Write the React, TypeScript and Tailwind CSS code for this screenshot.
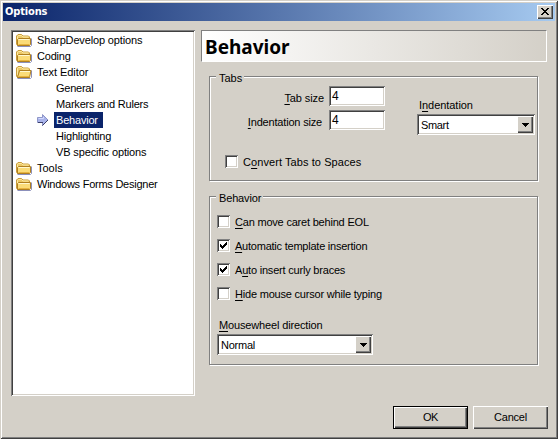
import type { ReactNode } from "react";

const SUNKEN =
  "bg-white shadow-[inset_1px_1px_0_#808080,inset_-1px_-1px_0_#fff,inset_2px_2px_0_#404040,inset_-2px_-2px_0_#d4d0c8]";
const RAISED =
  "bg-[#d4d0c8] shadow-[inset_1px_1px_0_#fff,inset_-1px_-1px_0_#404040,inset_-2px_-2px_0_#808080]";

/* Caption whose access key is marked by a preceding "&". */
function Caption({ text, className = "" }: { text: string; className?: string }) {
  const at = text.indexOf("&");
  return (
    <span className={"block whitespace-pre leading-[14px] " + className}>
      {at < 0 ? text : (
        <>
          {text.slice(0, at)}
          <span className="underline decoration-1 underline-offset-2">{text[at + 1]}</span>
          {text.slice(at + 2)}
        </>
      )}
    </span>
  );
}

function Folder({ open = false }: { open?: boolean }) {
  return (
    <svg width="16" height="14" viewBox="0 0 16 14" className="shrink-0">
      <path d="M1.500 13.500h13l1-1V5.500" fill="none" stroke="#7f84b4" strokeOpacity=".9" />
      <path d="M.5 11V3L2 1.500h3.500L7 3h5.500l1 1v8.500h-12z" fill="#ecc866" stroke="#c99c3a" />
      <path d="M1.500 10V3.500l1-1h3L7 4h5.500" fill="none" stroke="#fbe9a0" />
      {open ? (
        <path d="M1.500 12.500l2-7h11.500l-1.500 7z" fill="#fbdc78" stroke="#b08020" />
      ) : (
        <path d="M1.500 12.500V6.500l1-1h12v6l-1 1z" fill="#fbdc78" stroke="#b08020" />
      )}
      <path d={open ? "M4 6.500h10" : "M2.500 6.500h11"} stroke="#fff8cf" />
      <path d="M2.500 11.500h11" stroke="#e8b440" />
    </svg>
  );
}

function FolderRow({ text, open, className = "" }: { text: string; open?: boolean; className?: string }) {
  return (
    <div className="flex h-4 items-center pl-[3px]">
      <Folder open={open} />
      <Caption text={text} className={"ml-[5px] " + className} />
    </div>
  );
}

function LeafRow({ text, selected, className = "" }: { text: string; selected?: boolean; className?: string }) {
  return (
    <div className="flex h-4 items-center pl-6">
      <span className="w-[17px] shrink-0">
        {selected && (
          <svg width="12" height="12" viewBox="0 0 12 12">
            <path d="M.5 3.500h5v-3l5.500 5.500-5.500 5.500v-3h-5z" fill="#a9b3ea" stroke="#8f97c8" />
            <path d="M5.500 11.500l5.500-5.500M1 8.500h5" stroke="#3c4068" />
            <path d="M1.500 4.500h5V3" stroke="#d3daff" fill="none" />
          </svg>
        )}
      </span>
      <span className={"flex h-4 items-center pl-[2px] " + (selected ? "w-[49px] bg-[#0a246a] text-white" : "")}>
        <Caption text={text} className={className} />
      </span>
    </div>
  );
}

function Group({ title, size, children, className = "" }: { title: string; size: string; children: ReactNode; className?: string }) {
  return (
    <section className={"ml-2 w-[329px] border border-[#808080] shadow-[1px_1px_0_#fff,inset_1px_1px_0_#fff] " + size}>
      <div className="-mt-[6px] ml-[6px] flex h-[14px]">
        <Caption text={title} className={"bg-[#d4d0c8] pl-[3px] pr-[2px] " + className} />
      </div>
      {children}
    </section>
  );
}

function Check({ text, checked, className = "" }: { text: string; checked?: boolean; className?: string }) {
  return (
    <div className="flex h-[13px] items-center">
      <span className={"flex size-[13px] shrink-0 items-center justify-center " + SUNKEN}>
        {checked && (
          <svg width="7" height="7" viewBox="0 0 7 7" shapeRendering="crispEdges">
            <path d="M0 2h1v1h1v1h1V3h1V2h1V1h1V0h1v3H6v1H5v1H4v1H3v1H2V6H1V5H0z" />
          </svg>
        )}
      </span>
      <Caption text={text} className={"ml-[5px] pt-px " + className} />
    </div>
  );
}

function Combo({ value, width, className = "" }: { value: string; width: string; className?: string }) {
  return (
    <div className={"flex h-[21px] items-center p-[2px] " + SUNKEN + " " + width}>
      <Caption text={value} className={"flex-1 pl-[2px] pt-px " + className} />
      <span className={"flex h-[17px] w-4 items-center justify-center " + RAISED}>
        <svg width="7" height="4" viewBox="0 0 7 4" shapeRendering="crispEdges">
          <path d="M0 0h7v1H6v1H5v1H4v1H3V3H2V2H1V1H0z" />
        </svg>
      </span>
    </div>
  );
}

function SizeRow({ text, className = "" }: { text: string; className?: string }) {
  return (
    <div className="flex h-5 justify-between">
      <Caption text={text} className={"ml-auto pt-[5px] " + className} />
      <div className={"h-5 w-14 pl-[3px] pt-[3px] text-[12px] " + SUNKEN}>
        <Caption text="4" />
      </div>
    </div>
  );
}

export default function App() {
  return (
    <div className="h-[439px] w-[558px] cursor-default overflow-hidden bg-[#d4d0c8] p-[3px] font-['Liberation_Sans',Arial,sans-serif] text-[11px] text-black shadow-[inset_1px_1px_0_#d4d0c8,inset_-1px_-1px_0_#404040,inset_2px_2px_0_#fff,inset_-2px_-2px_0_#808080]">
      <header className="flex h-[18px] items-center justify-between bg-linear-to-r/srgb from-[#0a246a] to-[#a6caf0] pl-[2px] pr-[2px]">
        <span className="font-['DejaVu_Sans_Condensed','DejaVu_Sans',sans-serif] text-[11px] font-bold leading-[14px] tracking-[-0.15px] text-white">Options</span>
        <button className={"flex h-[14px] w-4 items-center justify-center " + RAISED}>
          <svg width="8" height="7" viewBox="0 0 8 7" shapeRendering="crispEdges" className="-ml-px -mt-px">
            <path d="M0 0h2v1h1v1h2V1h1V0h2v1H7v1H6v1H5v1h1v1h1v1h1v1H6V6H5V5H3v1H2v1H0V6h1V5h1V4h1V3H2V2H1V1H0z" />
          </svg>
        </button>
      </header>

      <div className="flex gap-[6px] pl-2 pt-[9px]">
        <nav className={"h-[366px] w-[184px] p-[2px] " + SUNKEN}>
          <FolderRow text="SharpDevelop options" className="tracking-[-0.15px]" />
          <FolderRow text="Coding" className="tracking-[-0.2px]" />
          <FolderRow text="Text Editor" open className="tracking-[-0.05px]" />
          <LeafRow text="General" className="tracking-[-0.25px]" />
          <LeafRow text="Markers and Rulers" className="tracking-[-0.2px]" />
          <LeafRow text="Behavior" selected className="tracking-[-0.2px]" />
          <LeafRow text="Highlighting" className="tracking-[-0.2px]" />
          <LeafRow text="VB specific options" className="tracking-[-0.13px]" />
          <FolderRow text="Tools" />
          <FolderRow text="Windows Forms Designer" className="tracking-[-0.25px]" />
        </nav>

        <main className="w-[346px]">
          <h1 className="flex h-8 items-center border border-b-white border-l-[#808080] border-r-white border-t-[#808080] bg-linear-to-r/srgb from-white to-[#d4d0c8] pl-[3px] pt-[2px] font-['Noto_Sans','Open_Sans',sans-serif] text-[19px] font-bold leading-none">
            Behavior
          </h1>

          <Group title="Tabs" size="mt-[14px] h-[105px]">
            <div className="flex">
              <div className="mt-px w-[175px] space-y-1">
                <SizeRow text="&Tab size" className="mr-[5px] tracking-[-0.1px]" />
                <SizeRow text="&Indentation size" className="mr-[7px] tracking-[-0.18px]" />
              </div>
              <div className="ml-8 pt-[13px]">
                <Caption text="I&ndentation" className="mb-[2px] ml-[2px] tracking-[-0.05px]" />
                <Combo value="Smart" width="w-[118px]" className="tracking-[-0.35px]" />
              </div>
            </div>
            <div className="ml-[15px] mt-5">
              <Check text="C&onvert Tabs to Spaces" className="tracking-[0.08px]" />
            </div>
          </Group>

          <Group title="Behavior" size="mt-[15px] h-[169px]" className="tracking-[-0.15px]">
            <div className="ml-[7px] mt-[10px] space-y-[11px]">
              <Check text="&Can move caret behind EOL" className="tracking-[-0.2px]" />
              <Check text="&Automatic template insertion" checked className="tracking-[-0.23px]" />
              <Check text="A&uto insert curly braces" checked className="tracking-[-0.2px]" />
              <Check text="&Hide mouse cursor while typing" className="tracking-[-0.2px]" />
            </div>
            <div className="ml-[7px] mt-[18px]">
              <Caption text="&Mousewheel direction" className="mb-[2px] ml-[2px] tracking-[-0.15px]" />
              <Combo value="Normal" width="w-[156px]" className="tracking-[-0.25px]" />
            </div>
          </Group>
        </main>
      </div>

      <footer className="mt-[10px] flex justify-end gap-[5px] pr-[7px]">
        <button className="flex h-[23px] w-[75px] items-center justify-center border border-black shadow-[inset_1px_1px_0_#fff,inset_-1px_-1px_0_#404040,inset_-2px_-2px_0_#808080]">
          <Caption text="OK" className="-mt-px tracking-[-0.5px]" />
        </button>
        <button className={"flex h-[23px] w-[75px] items-center justify-center " + RAISED}>
          <Caption text="Cancel" className="-mt-px tracking-[-0.2px]" />
        </button>
      </footer>
    </div>
  );
}
